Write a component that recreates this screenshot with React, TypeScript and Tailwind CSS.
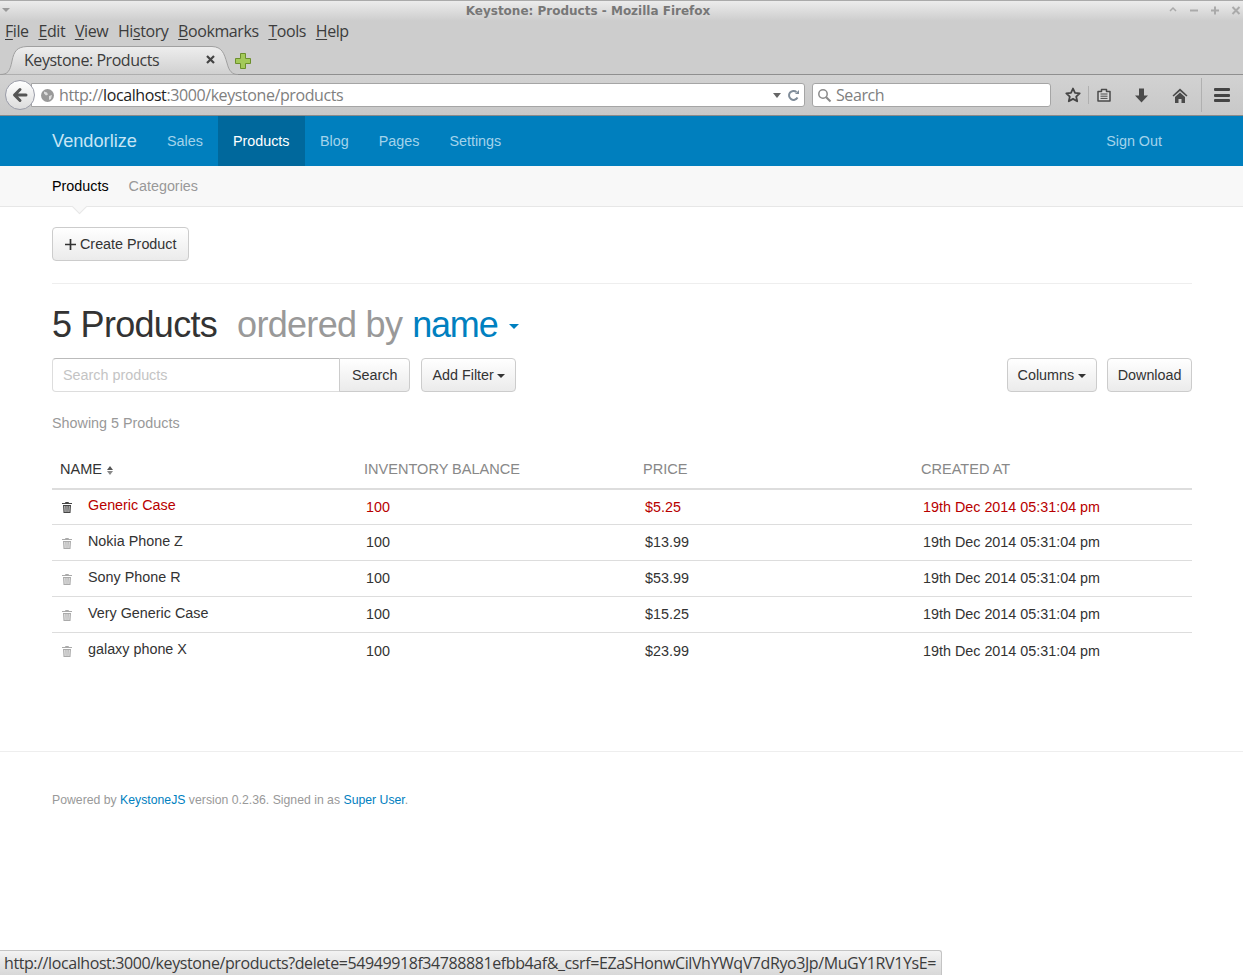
import React from "react";

const chromeFont = "font-['Open_Sans','Noto_Sans',sans-serif]";

const rows = [
  { name: "Generic Case", price: "$5.25", h: "h-[35px]", danger: true, nameCls: "-mt-[3px]", cellCls: "pt-[2px]", trashCls: "pt-[1px]" },
  { name: "Nokia Phone Z", price: "$13.99", h: "h-[36px]", danger: false, nameCls: "-mt-[1px]", cellCls: "", trashCls: "pt-[3px]" },
  { name: "Sony Phone R", price: "$53.99", h: "h-[36px]", danger: false, nameCls: "-mt-[1px]", cellCls: "", trashCls: "pt-[3px]" },
  { name: "Very Generic Case", price: "$15.25", h: "h-[36px]", danger: false, nameCls: "-mt-[1px]", cellCls: "", trashCls: "pt-[3px]" },
  { name: "galaxy phone X", price: "$23.99", h: "h-[36px]", danger: false, nameCls: "-mt-[3px]", cellCls: "pt-[2px]", trashCls: "pt-[1px]" },
];

const Caret = ({ className = "" }: { className?: string }) => (
  <span className={`inline-block w-0 h-0 border-x-[4px] border-x-transparent border-t-[4px] border-t-[#333] ${className}`} />
);

const Trash = ({ dark }: { dark: boolean }) => (
  <svg width="10" height="11" viewBox="0 0 10 11" className={dark ? "text-[#444]" : "text-[#aaa]"} fill="currentColor">
    <path d="M3.5 0h3l.5 1h3v1H0V1h3zM1 3h8l-.5 8h-7zM2.4 4l.3 6h.8l-.2-6zM4.6 4v6h.8V4zM6.8 4l-.3 6h.8l.3-6z" fillRule="evenodd" />
  </svg>
);

const Btn = ({ children, className = "" }: { children: React.ReactNode; className?: string }) => (
  <button className={`h-[34px] pt-[2px] flex items-center border border-[#ccc] rounded-[4px] bg-gradient-to-b from-white to-[#ebebeb] text-[#333] text-[14.35px] ${className}`}>
    {children}
  </button>
);

const Underlined = ({ pre = "", u, post }: { pre?: string; u: string; post: string }) => (
  <span>
    {pre}
    <span className="underline underline-offset-2">{u}</span>
    {post}
  </span>
);

export default function App() {
  return (
    <div className="relative h-[975px] w-[1243px] overflow-hidden bg-white font-['Liberation_Sans',sans-serif] text-[14.35px] text-[#333]">
      {/* firefox chrome */}
      <div className={`h-[116px] bg-[#cdcdcd] border-b border-[#8a8a8a] flex flex-col ${chromeFont}`}>
        <div className="relative h-[21px] shrink-0 border-t border-[#aaa] bg-gradient-to-b from-[#ececec] to-[#cdcdcd] flex items-center justify-center pr-[67px]">
          <span className="absolute left-[2px] top-[7px] w-0 h-0 border-x-[4px] border-x-transparent border-t-[4px] border-t-[#999]" />
          <span className="font-['DejaVu_Sans',sans-serif] font-bold text-[12px] text-[#777]">Keystone: Products - Mozilla Firefox</span>
          <div className="absolute right-[2px] top-[3px] flex gap-[11px] text-[#aaa]">
            <svg width="10" height="12" viewBox="0 0 10 12" fill="none" stroke="currentColor" strokeWidth="1.5"><path d="M2 7l3-3 3 3" /></svg>
            <svg width="10" height="12" viewBox="0 0 10 12" fill="none" stroke="currentColor" strokeWidth="2"><path d="M1 6.5h8" /></svg>
            <svg width="10" height="12" viewBox="0 0 10 12" fill="none" stroke="currentColor" strokeWidth="2"><path d="M1 6.5h8M5 2.5v8" /></svg>
            <svg width="10" height="12" viewBox="0 0 10 12" fill="none" stroke="currentColor" strokeWidth="2"><path d="M1.5 3l7 7M8.5 3l-7 7" /></svg>
          </div>
        </div>
        <div className="h-[21px] pb-[2px] shrink-0 flex items-center gap-[9.7px] pl-[5px] text-[16px] tracking-[-0.41px] text-[#3c3c3c]">
          <Underlined u="F" post="ile" />
          <Underlined u="E" post="dit" />
          <Underlined u="V" post="iew" />
          <Underlined pre="Hi" u="s" post="tory" />
          <Underlined u="B" post="ookmarks" />
          <Underlined u="T" post="ools" />
          <Underlined u="H" post="elp" />
        </div>
        <div className="relative h-[33px] shrink-0 flex items-end border-b border-[#8f8f8f]">
          <svg width="240" height="30" viewBox="0 0 240 30" className="absolute left-0 -bottom-px">
            <defs>
              <linearGradient id="tabfill" x1="0" y1="0" x2="0" y2="1">
                <stop offset="0" stopColor="#eeeeee" />
                <stop offset="1" stopColor="#d0d0d0" />
              </linearGradient>
            </defs>
            <path d="M0 29.5C8 29.5 10 26 12 16C14 6 17 2 27 1.5H212C222 2 224 8 227 18C229 26 232 29.5 238 29.5" fill="url(#tabfill)" stroke="#a0a0a0" />
          </svg>
          <div className="relative ml-[12px] h-[29px] w-[216px] flex items-center justify-between pl-[12px] pr-[13px] text-[16px] tracking-[-0.45px] text-[#3c3c3c]">
            <span>Keystone: Products</span>
            <svg width="9" height="9" viewBox="0 0 9 9" stroke="#444" strokeWidth="2.2"><path d="M1 1l7 7M8 1l-7 7" /></svg>
          </div>
          <svg width="18" height="18" viewBox="0 0 18 18" className="relative ml-[6px] mb-[4px]">
            <path d="M6.5 1.5h5v5h5v5h-5v5h-5v-5h-5v-5h5z" fill="#a3c95a" stroke="#6c8f2c" />
          </svg>
        </div>
        <div className="relative flex-1 flex items-center pl-[5px] bg-gradient-to-b from-[#d2d2d2] to-[#c8c8c8]">
          <div className="relative z-10 w-[30px] h-[30px] rounded-full border border-[#9a9ca8] bg-gradient-to-b from-white to-[#dcdcdc] flex items-center justify-center">
            <svg width="16" height="16" viewBox="0 0 16 16" fill="none" stroke="#555" strokeWidth="3" strokeLinecap="round" strokeLinejoin="round"><path d="M8 2.5L2.5 8 8 13.5M3.5 8H14" /></svg>
          </div>
          <div className="-ml-[4px] w-[774px] h-[24px] flex items-center bg-white border border-[#a5a5a5] rounded-r-[3px] pl-[9px] pr-[4px] text-[16px] tracking-[-0.41px] text-[#808080]">
            <svg width="13" height="13" viewBox="0 0 13 13" className="mr-[5px]"><circle cx="6.5" cy="6.5" r="6.5" fill="#999" /><path d="M3 2.5l3 1 1 2-2 1-2-2zM8 7l3-1-1 4-2 1z" fill="#ddd" /></svg>
            <span>http://<span className="text-[#222]">localhost</span>:3000/keystone/products</span>
            <span className="ml-auto w-0 h-0 border-x-[4px] border-x-transparent border-t-[5px] border-t-[#666]" />
            <svg width="13" height="13" viewBox="0 0 13 13" fill="none" stroke="#7f8c99" strokeWidth="2" className="ml-[6px]"><path d="M10.5 8.5A4.5 4.5 0 1 1 9.5 3" /><path d="M8 5h4V1z" fill="#7f8c99" stroke="none" /></svg>
          </div>
          <div className="ml-[7px] w-[239px] h-[24px] flex items-center bg-white border border-[#a5a5a5] rounded-[3px] pl-[4px] text-[16px] tracking-[-0.41px] text-[#808080]">
            <svg width="15" height="15" viewBox="0 0 15 15" fill="none" stroke="#8a8a8a" strokeWidth="1.5" className="mr-[4px]"><circle cx="6" cy="6" r="4.2" /><path d="M9.2 9.2L13.5 13.5" strokeWidth="2" /></svg>
            Search
          </div>
          <svg width="16" height="16" viewBox="0 0 16 16" fill="none" stroke="#444" strokeWidth="1.8" className="ml-[14px]"><path d="M8 1.5l2 4.4 4.7.5-3.5 3.2 1 4.7L8 11.9l-4.2 2.4 1-4.7L1.3 6.4 6 5.9z" strokeLinejoin="round" /></svg>
          <div className="ml-[7px] w-px h-[18px] bg-[#b0b0b0]" />
          <svg width="14" height="14" viewBox="0 0 14 14" className="ml-[8px]"><path d="M1 3.5h3.5V1.5h5v2H13v9.5H1z" fill="#d8d8d8" stroke="#4a4a4a" strokeWidth="1.5" strokeLinejoin="round" /><path d="M3.5 6h7M3.5 8.2h7M3.5 10.4h7" stroke="#4a4a4a" strokeWidth="1" /></svg>
          <svg width="15" height="15" viewBox="0 0 15 15" fill="#4a4a4a" className="ml-[23px]"><path d="M5 0.5h5v7h4l-6.5 7L1 7.5h4z" /></svg>
          <svg width="16" height="15" viewBox="0 0 16 15" className="ml-[23px]" fill="#4a4a4a"><path d="M8 0.5L0.5 7.5 1.6 8.6 8 3l6.4 5.6 1.1-1.1zM3 9l5-4.5L13 9v6H9.5v-4h-3v4H3z" /></svg>
          <div className="ml-[13px] w-px h-[34px] bg-[#b0b0b0]" />
          <div className="ml-[12px] w-[16px] flex flex-col gap-[2.5px]">
            <span className="h-[3px] bg-[#444] rounded-[1px]" />
            <span className="h-[3px] bg-[#444] rounded-[1px]" />
            <span className="h-[3px] bg-[#444] rounded-[1px]" />
          </div>
        </div>
      </div>

      {/* primary nav */}
      <nav className="h-[50px] pt-[2px] bg-[#007fbe] flex items-stretch pl-[52px] text-[#a3d3eb]">
        <span className="flex items-center text-[18.2px] text-[#c6e5f5] w-[85px] mr-[15px] whitespace-nowrap">Vendorlize</span>
        <span className="flex items-center px-[15px]">Sales</span>
        <span className="flex items-center pl-[15px] pr-[15.5px] -mt-[2px] pt-[2px] bg-[#00689c] text-white">Products</span>
        <span className="flex items-center px-[15px]">Blog</span>
        <span className="flex items-center px-[15px]">Pages</span>
        <span className="flex items-center px-[15px]">Settings</span>
        <span className="flex items-center ml-auto mr-[81px]">Sign Out</span>
      </nav>

      {/* sub nav */}
      <div className="relative h-[41px] pt-[2px] bg-[#f8f8f8] border-b border-[#e7e7e7] flex items-center pl-[52px] gap-[20px]">
        <span className="text-black">Products</span>
        <span className="text-[#999]">Categories</span>
        <span className="absolute left-[74px] top-[35px] w-[11px] h-[11px] rotate-45 bg-[#f8f8f8] border-r border-b border-[#e7e7e7]" />
      </div>

      <main className="pl-[52px] pr-[51px] pt-[20px]">
        <Btn className="w-[137px] pl-[12px]">
          <svg width="11" height="11" viewBox="0 0 11 11" stroke="#333" strokeWidth="1.7" className="mr-[4px] -mt-[2px]"><path d="M5.5 0v11M0 5.5h11" /></svg>
          Create Product
        </Btn>
        <hr className="mt-[22px] border-[#eeeeee]" />

        <h1 className="mt-[18px] h-[46px] flex items-center text-[36px] tracking-[-0.7px] leading-none text-[#333]">
          <span>5 Products</span>
          <span className="ml-[20px] text-[#999]">ordered by</span>
          <span className="ml-[10px] tracking-[-1.2px] text-[#0080c0]">name</span>
          <span className="ml-[12px] mt-[3px] w-0 h-0 border-x-[5px] border-x-transparent border-t-[5px] border-t-[#0080c0]" />
        </h1>

        <div className="mt-[10px] flex items-center">
          <div className="w-[288px] h-[34px] pt-[2px] flex items-center border border-[#ddd] border-t-[#bbb] rounded-l-[4px] pl-[10px] text-[#c4c4c4]">
            Search products
          </div>
          <Btn className="px-[12px] -ml-px rounded-l-none">Search</Btn>
          <Btn className="ml-[11px] px-[10px] gap-[3px]">Add Filter <Caret /></Btn>
          <Btn className="ml-auto px-[10px] gap-[4px]">Columns <Caret /></Btn>
          <Btn className="ml-[10px] px-[9.5px]">Download</Btn>
        </div>

        <p className="mt-[21px] text-[#999] leading-[20px]">Showing 5 Products</p>

        <div className="mt-[19px]">
          <div className="grid grid-cols-[304px_279px_278px_1fr] h-[38px] items-center border-b-2 border-[#ddd] text-[14.55px] text-[#888]">
            <span className="pl-[8px] text-[#333] flex items-center gap-[5px]">
              NAME
              <span className="flex flex-col gap-px">
                <span className="w-0 h-0 border-x-[3.5px] border-x-transparent border-b-[4px] border-b-[#555]" />
                <span className="w-0 h-0 border-x-[3.5px] border-x-transparent border-t-[4px] border-t-[#888]" />
              </span>
            </span>
            <span className="pl-[8px]">INVENTORY BALANCE</span>
            <span className="pl-[8px]">PRICE</span>
            <span className="pl-[8px]">CREATED AT</span>
          </div>
          {rows.map((r) => (
            <div
              key={r.name}
              className={`grid grid-cols-[304px_279px_278px_1fr] ${r.h} items-center ${r.name === "galaxy phone X" ? "" : "border-b border-[#ddd]"} ${r.danger ? "text-[#b80000]" : "text-[#333]"}`}
            >
              <span className="flex items-center">
                <span className={`w-[36px] pl-[10px] ${r.trashCls}`}><Trash dark={r.danger} /></span>
                <span className={r.nameCls}>{r.name}</span>
              </span>
              <span className={`pl-[10px] ${r.cellCls}`}>100</span>
              <span className={`pl-[10px] ${r.cellCls}`}>{r.price}</span>
              <span className={`pl-[10px] ${r.cellCls}`}>19th Dec 2014 05:31:04 pm</span>
            </div>
          ))}
        </div>
      </main>

      <footer className="mt-[82px] border-t border-[#eeeeee] pl-[52px] pt-[40px] text-[12.25px] leading-[16px] text-[#999]">
        Powered by <span className="text-[#0080c0]">KeystoneJS</span> version 0.2.36. Signed in as <span className="text-[#0080c0]">Super User</span>.
      </footer>

      {/* link status popup */}
      <div className={`absolute left-0 bottom-0 w-[942px] h-[25px] flex items-center pl-[4px] bg-gradient-to-b from-[#f3f3f3] to-[#d8d8d8] border-t border-r border-[#c4c4c4] rounded-tr-[3px] text-[16px] tracking-[-0.41px] text-[#3c3c3c] whitespace-nowrap ${chromeFont}`}>
        http://localhost:3000/keystone/products?delete=54949918f34788881efbb4af&amp;_csrf=EZaSHonwCilVhYWqV7dRyo3Jp/MuGY1RV1YsE=
      </div>
    </div>
  );
}
